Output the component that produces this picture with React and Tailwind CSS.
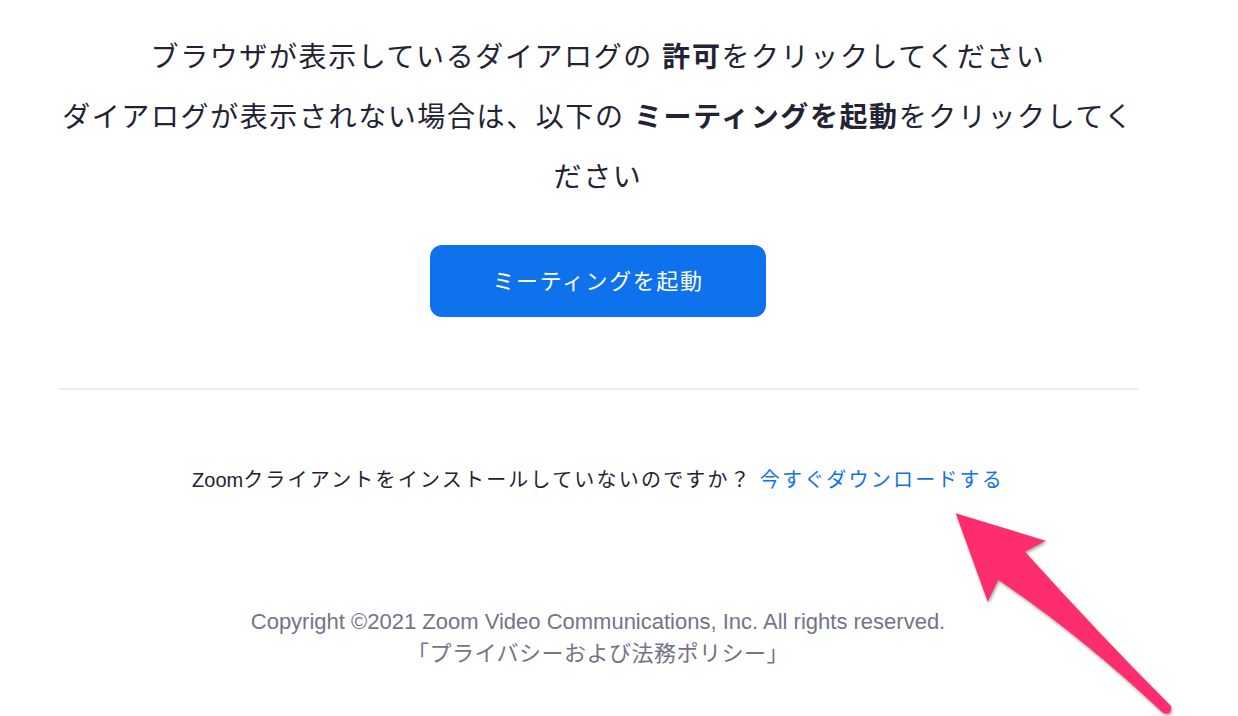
import React from 'react';

const jp = { fontFamily: '"Liberation Sans", "Noto Sans CJK JP", sans-serif' };

function Arrow() {
    return (
        <svg className="absolute left-[940px] top-[500px] w-[298px] h-[216px] drop-shadow-[1px_2px_1.5px_rgba(0,0,0,0.35)]" viewBox="0 0 298 216">
            <path
                d="M15.7 13.3 L105.7 40.7 L85 51.7 Q160 135 231 206 Q232 212 228 213.5 Q224 214 222 212 Q140 135 58.3 80 L47.7 101.7 Z"
                fill="#fe2d6d"
            />
        </svg>
    );
}

export default function App() {
    return (
        <div className="relative w-[1238px] h-[716px] bg-white overflow-hidden" style={jp}>
            <div className="w-[1080px] ml-[58px] flex flex-col items-center">
                <div className="pt-[28px] text-[28px] leading-[60px] tracking-[1.6px] text-[#232333] text-center">
                    <p>ブラウザが表示しているダイアログの <b className="font-bold">許可</b>をクリックしてください</p>
                    <p className="whitespace-nowrap">ダイアログが表示されない場合は、以下の <b className="font-bold">ミーティングを起動</b>をクリックしてく</p>
                    <p>ださい</p>
                </div>

                <button className="mt-[37px] w-[336px] h-[72px] rounded-[12px] bg-[#0e72ed] text-white text-[22px] tracking-[1.6px]">
                    ミーティングを起動
                </button>

                <div className="mt-[71px] w-full h-[2px] bg-[#ededf4]" />

                <p className="mt-[75px] text-[20px] tracking-[2.2px] text-[#232333] whitespace-nowrap">
                    <span className="tracking-normal">Zoom</span>クライアントをインストールしていないのですか？ <a className="text-[#0e72ed]">今すぐダウンロードする</a>
                </p>

                <div className="mt-[111px] text-[22px] leading-[32px] text-[#747487] text-center whitespace-nowrap">
                    <p>Copyright ©2021 Zoom Video Communications, Inc. All rights reserved.</p>
                    <p className="tracking-[0.5px]">「プライバシーおよび法務ポリシー」</p>
                </div>
            </div>
            <Arrow />
        </div>
    );
}
